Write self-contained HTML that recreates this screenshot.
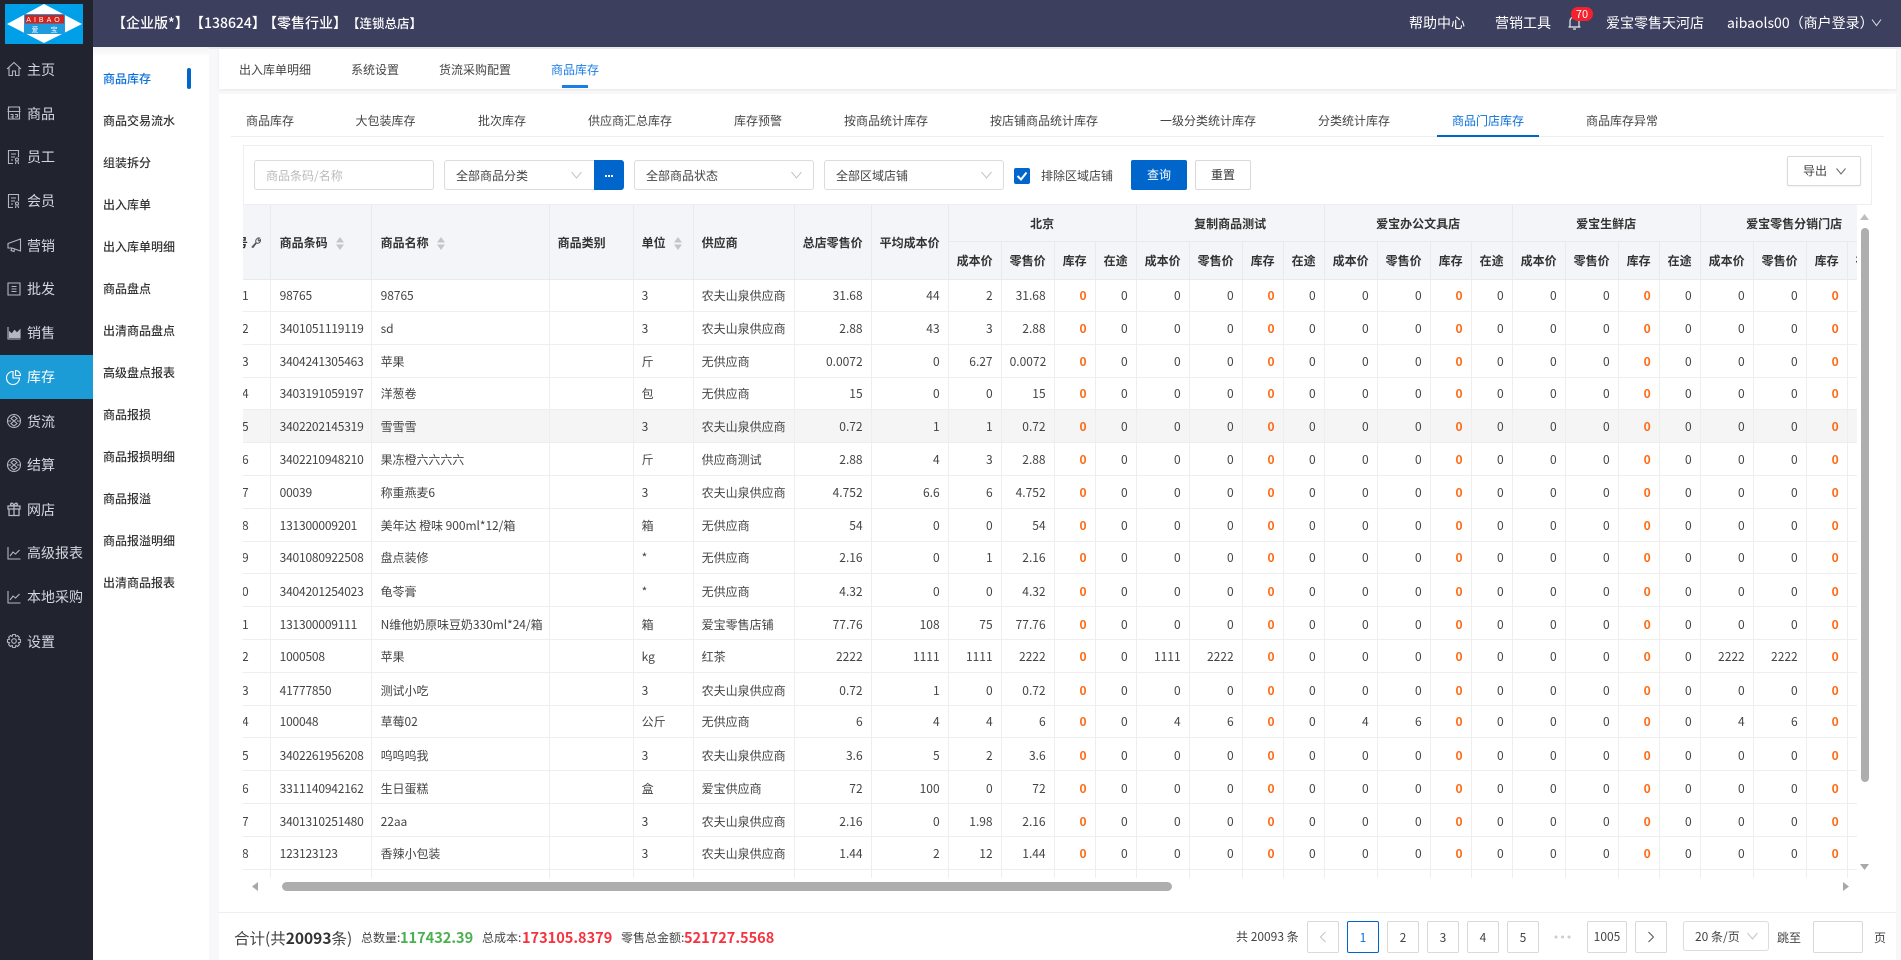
<!DOCTYPE html>
<html lang="zh-CN">
<head>
<meta charset="utf-8">
<title>商品门店库存</title>
<style>
*{box-sizing:border-box}
html,body{margin:0;padding:0;width:1901px;height:960px;overflow:hidden;background:#f8f8fa;font-family:"Noto Sans CJK SC","Liberation Sans",sans-serif;font-size:12px;color:#333}
.a{position:absolute;white-space:nowrap;line-height:20px}
.b{position:absolute}
#side{position:absolute;left:0;top:0;width:93px;height:960px;background:#21242f}
#head{position:absolute;left:93px;top:0;width:1808px;height:47px;background:#3d3f5e}
.nav{position:absolute;left:0;width:93px;height:44px;color:#d4d7df;font-size:14px;line-height:44px;padding-left:27px;white-space:nowrap}
.nav.d{padding-top:1px}
.nav svg{position:absolute;left:6px;top:14px;width:16px;height:16px;fill:none;stroke:#b4b7c0;stroke-width:1.1}
.nav.on{background:#1c9cd7;color:#fff}
.nav.on svg{stroke:#fff}
#sub{position:absolute;left:93px;top:47px;width:115.5px;height:913px;background:#fff}
.m{position:absolute;left:103px;font-size:12px;line-height:20px;color:#333;white-space:nowrap;font-weight:500}
.h{color:#fff;font-size:14px}
.t1{color:#444;font-size:12px}
.sel{position:absolute;top:160px;height:30px;background:#fff;border:1px solid #dcdcdc;border-radius:3px;line-height:28px;padding-left:11px;padding-top:1px;font-size:12px;color:#444;white-space:nowrap}
.sel svg,.chev{position:absolute;fill:none;stroke:#c4c4c4;stroke-width:1}
.pg{position:absolute;top:921px;height:32px;width:32px;border:1px solid #d9d9d9;border-radius:2px;background:#fff;text-align:center;line-height:30px;font-size:12px;color:#444}
#wrap{position:absolute;left:243px;top:205px;width:1614px;height:673px;overflow:hidden}
table{position:absolute;left:-60.4px;top:0;border-collapse:separate;border-spacing:0;table-layout:fixed;width:1706px}
th{background:#f4f5f9;font-size:12px;font-weight:700;color:#333;border-right:1px solid #e9eaee;border-bottom:1px solid #e9eaee;padding:0 8px;text-align:left;white-space:nowrap;overflow:hidden}
th:nth-child(2),th:nth-child(3){padding-left:9px}
th.c{text-align:center;padding:0}
td{height:inherit;font-size:12px;color:#444;border-right:1px solid #eee;border-bottom:1px solid #eee;padding:0 8px;text-align:right;white-space:nowrap;overflow:hidden;background:#fff}
td:nth-child(-n+6){text-align:left}
td:nth-child(1){text-align:right;padding-right:21px}
td:nth-child(2){letter-spacing:-.2px;padding-left:9px}
td:nth-child(3){padding-left:9px;letter-spacing:-.05px}
td:nth-child(4n+11){color:#ff6a13;font-weight:700}
tr{height:33px}
tr.s{height:32px}
tr.p td{padding-top:2px}
tr.hv td{background:#f5f5f5}
svg.sa{display:inline-block;width:8px;height:13px;margin-left:8px;vertical-align:-3px}
.v{font-size:14.5px;font-weight:700}
</style>
</head>
<body>
<svg width="0" height="0" style="position:absolute"><defs><symbol id="sa" viewBox="0 0 8 13"><path d="M4 0L8 5.500H0Z" fill="#c4c5c9"/><path d="M0 7.500H8L4 13Z" fill="#c4c5c9"/></symbol></defs></svg>

<div id="side"></div>
<!-- logo -->
<svg class="b" style="left:5px;top:4px" width="78" height="40" viewBox="0 0 78 40">
<rect width="78" height="40" fill="#00a0e9"/>
<polygon points="2,20 39,0 77,20 39,39" fill="#fff"/>
<rect x="19" y="10" width="41" height="20" fill="#1e9bdc"/>
<rect x="20" y="11" width="39" height="8.500" fill="#d2231f"/>
<text x="39.500" y="18" text-anchor="middle" fill="#fff" font-family="Liberation Sans" font-size="7" letter-spacing="3">AIBAO</text>
<text x="30" y="28" text-anchor="middle" fill="#fff" font-family="Noto Sans CJK SC" font-size="7">爱</text>
<text x="49" y="28" text-anchor="middle" fill="#fff" font-family="Noto Sans CJK SC" font-size="7">宝</text>
</svg>

<div class="nav d" style="top:47px"><svg viewBox="0 0 16 16"><path d="M1 8L8 1.500L15 8M3 6.500V14.500H6.500V10H9.500V14.500H13V6.500"/></svg>主页</div>
<div class="nav d" style="top:91px"><svg viewBox="0 0 16 16"><path d="M2.500 2H13.500V14H2.500ZM1.500 6.500H14.500M2 5L3 2M14 5L13 2M4.500 9.500H7V14M9 9.500H11.500V12M9 12H11.500M4.500 12H7"/></svg>商品</div>
<div class="nav" style="top:135px"><svg viewBox="0 0 16 16"><path d="M7 14.500H2.500V1.500H12.500V8M5 5H10M5 8H9M5 11H7"/><circle cx="11" cy="10.500" r="1.500"/><path d="M9.500 15L10 12.500M12.500 15L12 12.500"/></svg>员工</div>
<div class="nav" style="top:179px"><svg viewBox="0 0 16 16"><path d="M7 14.500H2.500V1.500H12.500V8M5 5H10M5 8H9M5 11H7"/><circle cx="11" cy="10.500" r="1.500"/><path d="M9.500 15L10 12.500M12.500 15L12 12.500"/></svg>会员</div>
<div class="nav d" style="top:223px"><svg viewBox="0 0 16 16"><path d="M14.500 2V14L6 11H2V6.500L14.500 2ZM6 11L5 13.500L8 14.500L8.500 12"/></svg>营销</div>
<div class="nav" style="top:267px"><svg viewBox="0 0 16 16"><path d="M2 2H14V14H2ZM5.500 5.500H10.500M5.500 8H10.500M5.500 10.500H10.500"/></svg>批发</div>
<div class="nav" style="top:311px"><svg viewBox="0 0 16 16"><path d="M2 2V14H14.500"/><path d="M3.500 12.500V7L6 9L8.500 5.500L11 8L14 5V12.500Z" fill="#b4b7c0"/></svg>销售</div>
<div class="nav on" style="top:355px"><svg viewBox="0 0 16 16"><path d="M7 2.500A6.500 6.500 0 1 0 13.500 9H7ZM9.500 1.500A5 5 0 0 1 14.500 6.500H9.500Z"/></svg>库存</div>
<div class="nav d" style="top:399px"><svg viewBox="0 0 16 16"><circle cx="8" cy="8" r="6.500"/><path d="M8 3L11 5.500L8 8L5 5.500ZM8 8L11 10.500L8 13L5 10.500ZM2 8H5M11 8H14"/></svg>货流</div>
<div class="nav" style="top:443px"><svg viewBox="0 0 16 16"><circle cx="8" cy="8" r="6.500"/><path d="M8 3L11 5.500L8 8L5 5.500ZM8 8L11 10.500L8 13L5 10.500ZM2 8H5M11 8H14"/></svg>结算</div>
<div class="nav d" style="top:487px"><svg viewBox="0 0 16 16"><path d="M2 5H14V8H2ZM3 8H13V14.500H3ZM8 5V14.500M8 5C5 5 4 3.500 5 2.500C6 1.500 8 3 8 5C8 3 10 1.500 11 2.500C12 3.500 11 5 8 5Z" stroke-width="1.300"/></svg>网店</div>
<div class="nav" style="top:531px"><svg viewBox="0 0 16 16"><path d="M2 2V14H14.500M4 11L7 7L9.500 9L13.500 5"/></svg>高级报表</div>
<div class="nav" style="top:575px"><svg viewBox="0 0 16 16"><path d="M2 2V14H14.500M4 11L7 7L9.500 9L13.500 5"/></svg>本地采购</div>
<div class="nav d" style="top:619px"><svg viewBox="0 0 16 16"><path d="M6.700 1.500H9.300L9.800 3.500L11.600 2.600L13.400 4.400L12.500 6.200L14.500 6.700V9.300L12.500 9.800L13.400 11.600L11.600 13.400L9.800 12.500L9.300 14.500H6.700L6.200 12.500L4.400 13.400L2.600 11.600L3.500 9.800L1.500 9.300V6.700L3.500 6.200L2.600 4.400L4.400 2.600L6.200 3.500Z"/><circle cx="8" cy="8" r="2.300"/></svg>设置</div>

<!-- top header -->
<div id="head"></div>
<div class="a h" style="left:112px;top:13px;font-weight:500">【企业版*】</div>
<div class="a h" style="left:190px;top:13px;font-weight:500">【138624】</div>
<div class="a h" style="left:263px;top:13px;font-weight:500">【零售行业】</div>
<div class="a" style="left:347px;top:13px;color:#fff;font-size:12.500px;font-weight:500">【连锁总店】</div>
<div class="a h" style="left:1409px;top:13px">帮助中心</div>
<div class="a h" style="left:1495px;top:13px">营销工具</div>
<svg class="b" style="left:1567px;top:15px" width="15" height="16" viewBox="0 0 15 16" fill="none" stroke="#e8e9ef" stroke-width="1.200"><path d="M3 12V6.500C3 3.500 5 2 7.500 2S12 3.500 12 6.500V12ZM1.500 12H13.500M6 14H9"/></svg>
<div class="b" style="left:1571px;top:7px;width:22px;height:14px;border-radius:7px;background:#f5222d;color:#fff;font-size:11px;line-height:14px;text-align:center">70</div>
<div class="a h" style="left:1606px;top:13px">爱宝零售天河店</div>
<div class="a h" style="left:1727px;top:13px">aibaols00（商户登录）</div>
<svg class="b" style="left:1871px;top:18px" width="11" height="9" viewBox="0 0 11 9" fill="none" stroke="#dfe0e6" stroke-width="1"><path d="M1 1.500L5.500 7.500L10 1.500"/></svg>

<!-- secondary menu -->
<div id="sub"></div>
<div class="b" style="left:93px;top:47px;width:115.500px;height:10px;background:linear-gradient(#f2f2f4,#fff)"></div>
<div class="m" style="top:69px;color:#0a6fd8">商品库存</div>
<div class="b" style="left:187px;top:68px;width:4px;height:21px;border-radius:2px;background:#0066cc"></div>
<div class="m" style="top:111px">商品交易流水</div>
<div class="m" style="top:153px">组装拆分</div>
<div class="m" style="top:195px">出入库单</div>
<div class="m" style="top:237px">出入库单明细</div>
<div class="m" style="top:279px">商品盘点</div>
<div class="m" style="top:321px">出清商品盘点</div>
<div class="m" style="top:363px">高级盘点报表</div>
<div class="m" style="top:405px">商品报损</div>
<div class="m" style="top:447px">商品报损明细</div>
<div class="m" style="top:489px">商品报溢</div>
<div class="m" style="top:531px">商品报溢明细</div>
<div class="m" style="top:573px">出清商品报表</div>

<!-- top tabs -->
<div class="b" style="left:208.500px;top:47px;width:1692.500px;height:2px;background:#ebebef"></div>
<div class="b" style="left:219px;top:49px;width:1677px;height:40px;background:#fff;box-shadow:0 1px 3px rgba(0,0,0,.07)"></div>
<div class="a t1" style="left:239px;top:60px">出入库单明细</div>
<div class="a t1" style="left:351px;top:60px">系统设置</div>
<div class="a t1" style="left:439px;top:60px">货流采购配置</div>
<div class="a t1" style="left:551px;top:60px;color:#1a7de8">商品库存</div>
<div class="b" style="left:562px;top:85px;width:26px;height:3px;background:#1a7de8"></div>

<!-- main card -->
<div class="b" style="left:219px;top:94px;width:1677px;height:866px;background:#fff"></div>
<div class="a t1" style="left:246px;top:111px">商品库存</div>
<div class="a t1" style="left:355.500px;top:111px">大包装库存</div>
<div class="a t1" style="left:478px;top:111px">批次库存</div>
<div class="a t1" style="left:588px;top:111px">供应商汇总库存</div>
<div class="a t1" style="left:734px;top:111px">库存预警</div>
<div class="a t1" style="left:844px;top:111px">按商品统计库存</div>
<div class="a t1" style="left:990px;top:111px">按店铺商品统计库存</div>
<div class="a t1" style="left:1160px;top:111px">一级分类统计库存</div>
<div class="a t1" style="left:1318px;top:111px">分类统计库存</div>
<div class="a t1" style="left:1452px;top:111px;color:#0a6fd8">商品门店库存</div>
<div class="a t1" style="left:1586px;top:111px">商品库存异常</div>
<div class="b" style="left:231px;top:136px;width:1653px;height:1px;background:#eee"></div>
<div class="b" style="left:1437px;top:135px;width:102px;height:2px;background:#0066cc"></div>

<!-- filter -->
<div class="b" style="left:243px;top:145px;width:1629px;height:60px;border:1px solid #eeeef2"></div>
<div class="sel" style="left:254px;width:180px;color:#bbb">商品条码/名称</div>
<div class="sel" style="left:444px;width:151px;border-radius:3px 0 0 3px">全部商品分类<svg style="left:126px;top:10px" width="11" height="8" viewBox="0 0 11 8"><path d="M.5 1L5.500 7L10.500 1"/></svg></div>
<div class="b" style="left:594px;top:160px;width:30px;height:30px;background:#0066cc;border-radius:0 3px 3px 0"><svg width="30" height="30"><rect x="11" y="15" width="2" height="2" fill="#fff"/><rect x="14" y="15" width="2" height="2" fill="#fff"/><rect x="17" y="15" width="2" height="2" fill="#fff"/></svg></div>
<div class="sel" style="left:634px;width:180px">全部商品状态<svg style="left:156px;top:10px" width="11" height="8" viewBox="0 0 11 8"><path d="M.5 1L5.500 7L10.500 1"/></svg></div>
<div class="sel" style="left:824px;width:180px">全部区域店铺<svg style="left:156px;top:10px" width="11" height="8" viewBox="0 0 11 8"><path d="M.5 1L5.500 7L10.500 1"/></svg></div>
<div class="b" style="left:1014px;top:168px;width:16px;height:16px;background:#0066cc;border-radius:2px"><svg width="16" height="16" fill="none" stroke="#fff" stroke-width="2"><path d="M3.500 8L7 11.500L12.500 4.500"/></svg></div>
<div class="a t1" style="left:1041px;top:166px">排除区域店铺</div>
<div class="b" style="left:1131px;top:160px;width:56px;height:30px;background:#0066cc;border-radius:2px;color:#fff;text-align:center;line-height:29px">查询</div>
<div class="b" style="left:1195px;top:160px;width:56px;height:30px;background:#fff;border:1px solid #d9d9d9;border-radius:2px;color:#333;text-align:center;line-height:27px">重置</div>
<div class="b" style="left:1787px;top:156px;width:74px;height:30px;background:#fff;border:1px solid #d9d9d9;border-radius:2px;color:#444;line-height:28px;padding-left:15px;box-shadow:0 1px 2px rgba(0,0,0,.05)">导出<svg style="position:absolute;left:48px;top:11px" width="10" height="7" viewBox="0 0 10 7" fill="none" stroke="#666"><path d="M.5 .5L5 6L9.500 .5"/></svg></div>

<!-- table -->
<div id="wrap">
<table>
<colgroup><col style="width:88px"><col style="width:101px"><col style="width:178px"><col style="width:84px"><col style="width:60px"><col style="width:101px"><col style="width:77px"><col style="width:77px">
<col style="width:53px"><col style="width:53px"><col style="width:41px"><col style="width:41px"><col style="width:53px"><col style="width:53px"><col style="width:41px"><col style="width:41px"><col style="width:53px"><col style="width:53px"><col style="width:41px"><col style="width:41px"><col style="width:53px"><col style="width:53px"><col style="width:41px"><col style="width:41px"><col style="width:53px"><col style="width:53px"><col style="width:41px"><col style="width:41px"></colgroup>
<thead>
<tr style="height:37px"><th rowspan="2" style="text-align:right;padding-right:9px">序号 <svg width="10" height="11" viewBox="0 0 10 11" fill="none" stroke="#555" style="vertical-align:-1px"><path d="M1 10L5 5.500C4 3 6 .5 8.500 1L7 3L8 4L9.500 2.500C10 5 7.500 7 5.500 6L2 10.500Z"/></svg></th><th rowspan="2">商品条码<svg class="sa"><use href="#sa"/></svg></th><th rowspan="2">商品名称<svg class="sa"><use href="#sa"/></svg></th><th rowspan="2">商品类别</th><th rowspan="2">单位<svg class="sa"><use href="#sa"/></svg></th><th rowspan="2">供应商</th><th rowspan="2" style="padding-right:0">总店零售价</th><th rowspan="2" style="padding-right:0">平均成本价</th>
<th class="c" colspan="4">北京</th><th class="c" colspan="4">复制商品测试</th><th class="c" colspan="4">爱宝办公文具店</th><th class="c" colspan="4">爱宝生鲜店</th><th class="c" colspan="4">爱宝零售分销门店</th></tr>
<tr style="height:38px"><th class="c">成本价</th><th class="c">零售价</th><th class="c">库存</th><th class="c">在途</th><th class="c">成本价</th><th class="c">零售价</th><th class="c">库存</th><th class="c">在途</th><th class="c">成本价</th><th class="c">零售价</th><th class="c">库存</th><th class="c">在途</th><th class="c">成本价</th><th class="c">零售价</th><th class="c">库存</th><th class="c">在途</th><th class="c">成本价</th><th class="c">零售价</th><th class="c">库存</th><th class="c">在途</th></tr>
</thead>
<tbody>
<tr class="s"><td>1<td>98765<td>98765<td><td>3<td>农夫山泉供应商<td>31.68<td>44<td>2<td>31.68<td>0<td>0<td>0<td>0<td>0<td>0<td>0<td>0<td>0<td>0<td>0<td>0<td>0<td>0<td>0<td>0<td>0<td>0</tr>
<tr><td>2<td>3401051119119<td>sd<td><td>3<td>农夫山泉供应商<td>2.88<td>43<td>3<td>2.88<td>0<td>0<td>0<td>0<td>0<td>0<td>0<td>0<td>0<td>0<td>0<td>0<td>0<td>0<td>0<td>0<td>0<td>0</tr>
<tr><td>3<td>3404241305463<td>苹果<td><td>斤<td>无供应商<td>0.0072<td>0<td>6.27<td>0.0072<td>0<td>0<td>0<td>0<td>0<td>0<td>0<td>0<td>0<td>0<td>0<td>0<td>0<td>0<td>0<td>0<td>0<td>0</tr>
<tr class="s"><td>4<td>3403191059197<td>洋葱卷<td><td>包<td>无供应商<td>15<td>0<td>0<td>15<td>0<td>0<td>0<td>0<td>0<td>0<td>0<td>0<td>0<td>0<td>0<td>0<td>0<td>0<td>0<td>0<td>0<td>0</tr>
<tr class="hv"><td>5<td>3402202145319<td>雪雪雪<td><td>3<td>农夫山泉供应商<td>0.72<td>1<td>1<td>0.72<td>0<td>0<td>0<td>0<td>0<td>0<td>0<td>0<td>0<td>0<td>0<td>0<td>0<td>0<td>0<td>0<td>0<td>0</tr>
<tr><td>6<td>3402210948210<td>果冻橙六六六六<td><td>斤<td>供应商测试<td>2.88<td>4<td>3<td>2.88<td>0<td>0<td>0<td>0<td>0<td>0<td>0<td>0<td>0<td>0<td>0<td>0<td>0<td>0<td>0<td>0<td>0<td>0</tr>
<tr><td>7<td>00039<td>称重燕麦6<td><td>3<td>农夫山泉供应商<td>4.752<td>6.6<td>6<td>4.752<td>0<td>0<td>0<td>0<td>0<td>0<td>0<td>0<td>0<td>0<td>0<td>0<td>0<td>0<td>0<td>0<td>0<td>0</tr>
<tr><td>8<td>131300009201<td>美年达 橙味 900ml*12/箱<td><td>箱<td>无供应商<td>54<td>0<td>0<td>54<td>0<td>0<td>0<td>0<td>0<td>0<td>0<td>0<td>0<td>0<td>0<td>0<td>0<td>0<td>0<td>0<td>0<td>0</tr>
<tr class="s"><td>9<td>3401080922508<td>盘点装修<td><td>*<td>无供应商<td>2.16<td>0<td>1<td>2.16<td>0<td>0<td>0<td>0<td>0<td>0<td>0<td>0<td>0<td>0<td>0<td>0<td>0<td>0<td>0<td>0<td>0<td>0</tr>
<tr class="p"><td>10<td>3404201254023<td>龟苓膏<td><td>*<td>无供应商<td>4.32<td>0<td>0<td>4.32<td>0<td>0<td>0<td>0<td>0<td>0<td>0<td>0<td>0<td>0<td>0<td>0<td>0<td>0<td>0<td>0<td>0<td>0</tr>
<tr class="p"><td>11<td>131300009111<td>N维他奶原味豆奶330ml*24/箱<td><td>箱<td>爱宝零售店铺<td>77.76<td>108<td>75<td>77.76<td>0<td>0<td>0<td>0<td>0<td>0<td>0<td>0<td>0<td>0<td>0<td>0<td>0<td>0<td>0<td>0<td>0<td>0</tr>
<tr><td>12<td>1000508<td>苹果<td><td>kg<td>红茶<td>2222<td>1111<td>1111<td>2222<td>0<td>0<td>1111<td>2222<td>0<td>0<td>0<td>0<td>0<td>0<td>0<td>0<td>0<td>0<td>2222<td>2222<td>0<td>0</tr>
<tr class="p"><td>13<td>41777850<td>测试小吃<td><td>3<td>农夫山泉供应商<td>0.72<td>1<td>0<td>0.72<td>0<td>0<td>0<td>0<td>0<td>0<td>0<td>0<td>0<td>0<td>0<td>0<td>0<td>0<td>0<td>0<td>0<td>0</tr>
<tr class="s"><td>14<td>100048<td>草莓02<td><td>公斤<td>无供应商<td>6<td>4<td>4<td>6<td>0<td>0<td>4<td>6<td>0<td>0<td>4<td>6<td>0<td>0<td>0<td>0<td>0<td>0<td>4<td>6<td>0<td>0</tr>
<tr class="p"><td>15<td>3402261956208<td>呜呜呜我<td><td>3<td>农夫山泉供应商<td>3.6<td>5<td>2<td>3.6<td>0<td>0<td>0<td>0<td>0<td>0<td>0<td>0<td>0<td>0<td>0<td>0<td>0<td>0<td>0<td>0<td>0<td>0</tr>
<tr class="p"><td>16<td>3311140942162<td>生日蛋糕<td><td>盒<td>爱宝供应商<td>72<td>100<td>0<td>72<td>0<td>0<td>0<td>0<td>0<td>0<td>0<td>0<td>0<td>0<td>0<td>0<td>0<td>0<td>0<td>0<td>0<td>0</tr>
<tr class="p"><td>17<td>3401310251480<td>22aa<td><td>3<td>农夫山泉供应商<td>2.16<td>0<td>1.98<td>2.16<td>0<td>0<td>0<td>0<td>0<td>0<td>0<td>0<td>0<td>0<td>0<td>0<td>0<td>0<td>0<td>0<td>0<td>0</tr>
<tr><td>18<td>123123123<td>香辣小包装<td><td>3<td>农夫山泉供应商<td>1.44<td>2<td>12<td>1.44<td>0<td>0<td>0<td>0<td>0<td>0<td>0<td>0<td>0<td>0<td>0<td>0<td>0<td>0<td>0<td>0<td>0<td>0</tr>
<tr><td><td><td><td><td><td><td><td><td><td><td><td><td><td><td><td><td><td><td><td><td><td><td><td><td><td><td><td></tr>
</tbody>
</table>
</div>

<!-- scrollbars -->
<svg class="b" style="left:1860px;top:214px" width="9" height="6"><path d="M4.500 0L9 6H0Z" fill="#bdbdbd"/></svg>
<div class="b" style="left:1860.500px;top:228px;width:8px;height:554px;border-radius:4px;background:#aeaeae"></div>
<svg class="b" style="left:1860px;top:864px" width="9" height="6"><path d="M0 0H9L4.500 6Z" fill="#a8a8a8"/></svg>
<svg class="b" style="left:252px;top:882px" width="6" height="9"><path d="M6 0V9L0 4.500Z" fill="#a8a8a8"/></svg>
<div class="b" style="left:282px;top:882px;width:890px;height:9px;border-radius:4.500px;background:#aeaeae"></div>
<svg class="b" style="left:1843px;top:882px" width="6" height="9"><path d="M0 0L6 4.500L0 9Z" fill="#a8a8a8"/></svg>

<!-- footer -->
<div class="b" style="left:219px;top:912px;width:1677px;height:1px;background:#eee"></div>
<div class="a" style="left:234px;top:928px;font-size:15.500px;color:#444">合计(共<b style="color:#333">20093</b>条)</div>
<div class="a" style="left:361px;top:928px;color:#444">总数量:</div>
<div class="a v" style="left:400px;top:928px;color:#4cb050">117432.39</div>
<div class="a" style="left:482px;top:928px;color:#444">总成本:</div>
<div class="a v" style="left:522px;top:928px;color:#f5333f">173105.8379</div>
<div class="a" style="left:621px;top:928px;color:#444">零售总金额:</div>
<div class="a v" style="left:684px;top:928px;color:#f5333f">521727.5568</div>

<!-- pagination -->
<div class="a" style="left:1236px;top:927px;color:#444">共 20093 条</div>
<div class="pg" style="left:1307px"><svg width="8" height="12" viewBox="0 0 8 12" fill="none" stroke="#c4c4c4" style="margin-top:9px"><path d="M6.500 1L1.500 6L6.500 11"/></svg></div>
<div class="pg" style="left:1347px;border-color:#0066cc;color:#0a6fd8;line-height:31px">1</div>
<div class="pg" style="left:1387px;line-height:31px">2</div>
<div class="pg" style="left:1427px;line-height:31px">3</div>
<div class="pg" style="left:1467px;line-height:31px">4</div>
<div class="pg" style="left:1507px;line-height:31px">5</div>
<svg class="b" style="left:1554px;top:935px" width="18" height="4"><circle cx="2" cy="2" r="1.500" fill="#ccc"/><circle cx="8.500" cy="2" r="1.500" fill="#ccc"/><circle cx="15" cy="2" r="1.500" fill="#ccc"/></svg>
<div class="pg" style="left:1587px;width:40px">1005</div>
<div class="pg" style="left:1635px"><svg width="8" height="12" viewBox="0 0 8 12" fill="none" stroke="#555" style="margin-top:9px"><path d="M1.500 1L6.500 6L1.500 11"/></svg></div>
<div class="sel" style="left:1683px;top:921px;width:86px;padding-left:11px;line-height:28px">20 条/页<svg style="left:63px;top:10px" width="11" height="8" viewBox="0 0 11 8"><path d="M.5 1L5.500 7L10.500 1"/></svg></div>
<div class="a" style="left:1777px;top:928px;color:#444">跳至</div>
<div class="pg" style="left:1813px;width:50px"></div>
<div class="a" style="left:1874px;top:928px;color:#444">页</div>
</body>
</html>
